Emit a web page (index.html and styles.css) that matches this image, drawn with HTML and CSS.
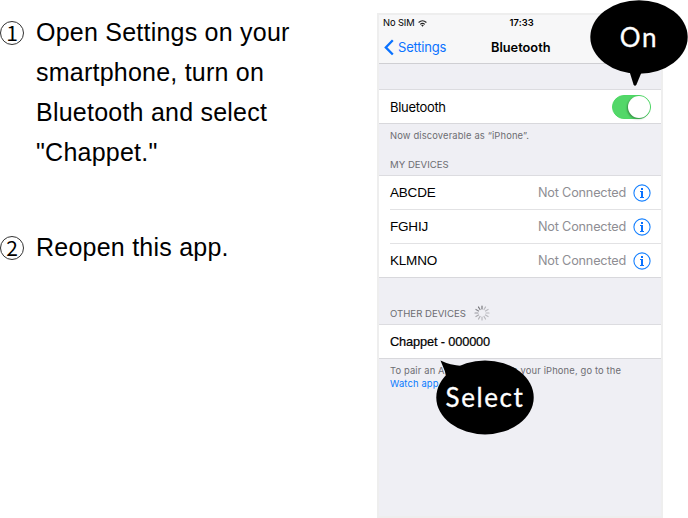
FILE: index.html
```html
<!DOCTYPE html>
<html lang="en">
<head>
<meta charset="utf-8">
<title>Bluetooth setup</title>
<link rel="stylesheet" href="styles.css">
</head>
<body>
<main class="guide">
  <ol class="steps">
    <li class="step"><span class="num">1</span><p>Open Settings on your<br>smartphone, turn on<br>Bluetooth and select<br>"Chappet."</p></li>
    <li class="step"><span class="num">2</span><p>Reopen this app.</p></li>
  </ol>
  <section class="phone">
    <header class="top">
      <div class="status">
        <span class="sim">No SIM</span>
        <svg class="wifi" width="9" height="7" viewBox="0 0 9 7"><path d="M.6 2.5Q4.5-.9 8.4 2.5M2.2 4.3Q4.5 2.4 6.8 4.3" fill="none" stroke="#222" stroke-width="1.1"/><path d="M3.2 5.2Q4.5 4.3 5.8 5.2L4.5 6.7z" fill="#222"/></svg>
        <time class="time">17:33</time>
      </div>
      <div class="nav">
        <svg class="chevron" width="10" height="17" viewBox="0 0 10 17"><path d="M8.8 1.3 1.8 8.4 8.8 15.5" fill="none" stroke="#0a72ff" stroke-width="2.3"/></svg>
        <span class="back">Settings</span>
        <h1 class="title">Bluetooth</h1>
      </div>
    </header>
    <div class="group first">
      <div class="row"><span class="label">Bluetooth</span><span class="switch"><span class="knob"></span></span></div>
    </div>
    <div class="captions">
      <p class="note discover">Now discoverable as “iPhone”.</p>
      <h2 class="heading mine">MY DEVICES</h2>
    </div>
    <div class="group">
      <div class="row device"><span class="name">ABCDE</span><span class="state">Not Connected</span><svg class="info" width="18" height="18" viewBox="0 0 18 18"><circle cx="9" cy="9" r="8.1" fill="none" stroke="#1681ff" stroke-width="1.1"/><path d="M8 4h2v2H8zM7 7h3v6h1v1H7v-1h1V8H7z" fill="#0a72ff"/></svg></div>
      <div class="row device"><span class="name">FGHIJ</span><span class="state">Not Connected</span><svg class="info" width="18" height="18" viewBox="0 0 18 18"><circle cx="9" cy="9" r="8.1" fill="none" stroke="#1681ff" stroke-width="1.1"/><path d="M8 4h2v2H8zM7 7h3v6h1v1H7v-1h1V8H7z" fill="#0a72ff"/></svg></div>
      <div class="row device"><span class="name">KLMNO</span><span class="state">Not Connected</span><svg class="info" width="18" height="18" viewBox="0 0 18 18"><circle cx="9" cy="9" r="8.1" fill="none" stroke="#1681ff" stroke-width="1.1"/><path d="M8 4h2v2H8zM7 7h3v6h1v1H7v-1h1V8H7z" fill="#0a72ff"/></svg></div>
    </div>
    <div class="other">
      <h2 class="heading">OTHER DEVICES</h2>
      <svg class="spinner" width="16" height="16" viewBox="-8 -8 16 16" stroke-width="1.2" stroke-linecap="round">
        <path d="M0-4V-7" stroke="#77777b"/><path d="M0-4V-7" stroke="#b9b9be" transform="rotate(30)"/><path d="M0-4V-7" stroke="#b9b9be" transform="rotate(60)"/><path d="M0-4V-7" stroke="#b9b9be" transform="rotate(90)"/><path d="M0-4V-7" stroke="#b9b9be" transform="rotate(120)"/><path d="M0-4V-7" stroke="#b9b9be" transform="rotate(150)"/><path d="M0-4V-7" stroke="#b9b9be" transform="rotate(180)"/><path d="M0-4V-7" stroke="#b0b0b5" transform="rotate(210)"/><path d="M0-4V-7" stroke="#a8a8ad" transform="rotate(240)"/><path d="M0-4V-7" stroke="#98989d" transform="rotate(270)"/><path d="M0-4V-7" stroke="#8a8a8f" transform="rotate(300)"/><path d="M0-4V-7" stroke="#7c7c80" transform="rotate(330)"/>
      </svg>
    </div>
    <div class="group">
      <div class="row"><span class="name chappet">Chappet - 000000</span></div>
    </div>
    <p class="note pair">To pair an Apple Watch with your iPhone, go to the <a class="link">Watch app.</a></p>
  </section>
  <div class="bubble on">
    <svg class="shape" width="98" height="87" viewBox="0 0 98 87"><ellipse cx="49" cy="37" rx="48.7" ry="36.8"/><path d="M39 70 43.5 84.5Q45 87 46.5 84.5L52.5 70z"/></svg>
    <span class="say">On</span>
  </div>
  <div class="bubble select">
    <svg class="shape" width="98" height="75" viewBox="0 0 98 75"><ellipse cx="49" cy="37.4" rx="48.7" ry="37"/><path d="M4.5.5Q14 5.2 26 6L12 22Q9 10 4.5.5z"/></svg>
    <span class="say">Select</span>
  </div>
</main>
</body>
</html>
```
FILE: styles.css
```css
* { box-sizing: border-box; margin: 0; padding: 0; }
body { background: #fff; color: #000; font-family: "Liberation Sans", sans-serif; }
svg { display: block; flex: none; }
.guide { position: relative; display: flex; width: 688px; height: 518px; overflow: hidden; }
.steps { width: 377px; padding-top: 12px; list-style: none; flex: none; }
.step { display: flex; gap: 12px; margin-bottom: 55px; font-size: 25px; line-height: 40px; letter-spacing: .23px; white-space: nowrap; }
.num { width: 24px; height: 24px; margin-top: 9px; border: 1px solid #333; border-radius: 50%; font-family: "Noto Sans CJK JP", sans-serif; font-weight: 400; font-size: 21px; line-height: 20px; letter-spacing: 0; text-align: center; }
.phone { width: 286px; height: 505px; margin-top: 13px; border: 2px solid #eee; background: #efeff4; font-family: Inter, sans-serif; flex: none; }
.top { height: 49px; background: #f7f7f8; border-bottom: 1px solid #cfcfd3; }
.status { display: grid; grid-template-columns: auto 9px 1fr; align-items: center; height: 16px; padding-left: 4px; font-size: 9.3px; line-height: 16px; letter-spacing: -.1px; }
.wifi { margin-left: 4px; }
.time { font-weight: 600; padding-left: 86px; letter-spacing: .1px; }
.nav { display: flex; align-items: center; height: 32px; padding-left: 5px; }
.back { margin-left: 4px; width: 93px; color: #0a72ff; font-size: 13px; letter-spacing: -.2px; }
.title { font-size: 12.8px; font-weight: 600; }
.group { background: #fff; border-top: 1px solid #dcdce0; }
.first { margin-top: 25px; }
.row { display: flex; align-items: center; height: 34px; padding: 0 10px 0 11px; border-bottom: 1px solid #d8d8dc; font-size: 13px; }
.label { letter-spacing: -.32px; }
.device { padding: 0 10px 0 0; margin-left: 11px; border-color: #e2e2e4; }
.device:last-child { margin-left: 0; padding-left: 11px; border-color: #d8d8dc; }
.name { font-family: "Liberation Sans", sans-serif; font-size: 13.5px; letter-spacing: -.2px; }
.chappet { font-size: 12.8px; letter-spacing: -.15px; -webkit-text-stroke: .2px #000; }
.state { margin-left: auto; color: #8e8e93; font-size: 12.7px; letter-spacing: -.2px; }
.info { margin-left: 7px; }
.switch { display: flex; justify-content: flex-end; width: 39px; height: 24px; margin-left: auto; border: 1px solid #4cd964; border-radius: 12px; background: #53d769; }
.knob { width: 22px; height: 22px; border-radius: 50%; background: #fff; box-shadow: -1px 1px 2px #0005; }
.captions { height: 51px; padding-left: 11px; }
.note { color: #6d6d72; font-size: 9.4px; line-height: 12.5px; letter-spacing: .14px; }
.discover { padding-top: 6px; height: 34px; }
.heading { color: #6d6d72; font-size: 9.6px; font-weight: 400; line-height: 13px; }
.other { display: flex; align-items: flex-end; gap: 8px; height: 46px; padding: 0 0 3px 11px; }
.other .heading { margin-bottom: 1px; }
.pair { width: 260px; padding: 6px 0 0 11px; }
.link { display: block; color: #087aff; }
.bubble { position: absolute; width: 98px; }
.on { left: 590px; top: 0; height: 87px; }
.select { left: 436px; top: 360px; height: 75px; }
.say { position: absolute; left: 0; top: 17px; width: 98px; color: #fff; font-family: Lato, sans-serif; font-size: 26px; line-height: 40px; text-align: center; letter-spacing: 1.6px; -webkit-text-stroke: .3px #fff; }
```
